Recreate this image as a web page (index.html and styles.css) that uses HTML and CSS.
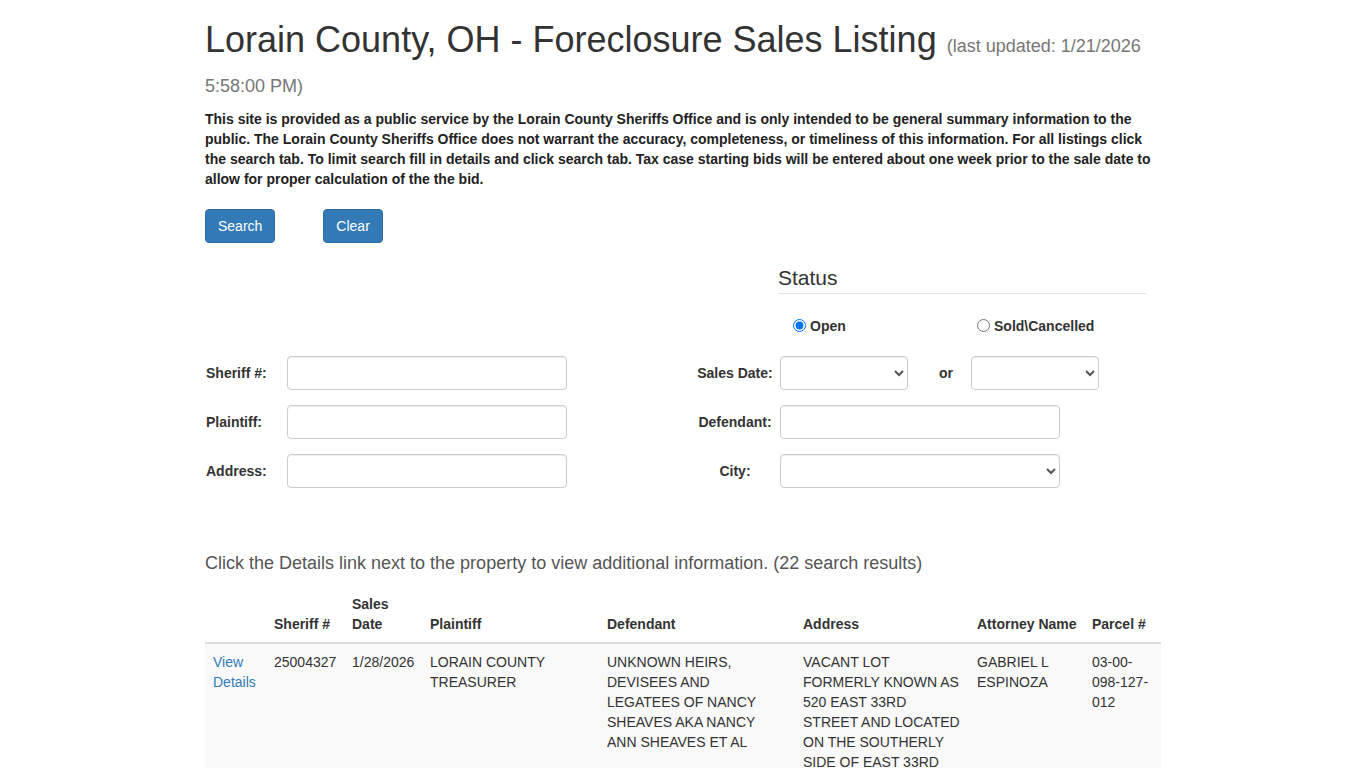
FILE: index.html
```html
<!DOCTYPE html>
<html lang="en">
<head>
<meta charset="utf-8">
<title>Lorain County, OH - Foreclosure Sales Listing</title>
<link rel="stylesheet" href="styles.css">
</head>
<body>
<div class="container">
  <h1 class="title">Lorain County, OH - Foreclosure Sales Listing <small class="updated">(last updated: 1/21/2026 5:58:00 PM)</small></h1>
  <p class="notice">This site is provided as a public service by the Lorain County Sheriffs Office and is only intended to be general summary information to the public. The Lorain County Sheriffs Office does not warrant the accuracy, completeness, or timeliness of this information. For all listings click the search tab. To limit search fill in details and click search tab. Tax case starting bids will be entered about one week prior to the sale date to allow for proper calculation of the the bid.</p>

  <div class="actions">
    <button class="btn btn-search" type="button">Search</button>
    <button class="btn btn-clear" type="button">Clear</button>
  </div>

  <div class="status-row">
    <div class="status">
      <div class="legend">Status</div>
      <div class="radios">
        <label class="radio"><input type="radio" name="status" checked> Open</label>
        <label class="radio"><input type="radio" name="status"> Sold\Cancelled</label>
      </div>
    </div>
  </div>

  <div class="form-grid">
    <div class="form-col">
      <div class="form-row">
        <label class="lbl-left">Sheriff #:</label>
        <input class="form-control w280" type="text">
      </div>
      <div class="form-row">
        <label class="lbl-left">Plaintiff:</label>
        <input class="form-control w280" type="text">
      </div>
      <div class="form-row">
        <label class="lbl-left">Address:</label>
        <input class="form-control w280" type="text">
      </div>
    </div>
    <div class="form-col">
      <div class="form-row">
        <label class="lbl-right">Sales Date:</label>
        <select class="form-control w128"><option></option></select>
        <span class="or">or</span>
        <select class="form-control w128"><option></option></select>
      </div>
      <div class="form-row">
        <label class="lbl-right">Defendant:</label>
        <input class="form-control w280" type="text">
      </div>
      <div class="form-row">
        <label class="lbl-right">City:</label>
        <select class="form-control w280"><option></option></select>
      </div>
    </div>
  </div>

  <h4 class="results-info">Click the Details link next to the property to view additional information. (22 search results)</h4>

  <table class="results">
    <thead>
      <tr>
        <th class="c-link"></th>
        <th class="c-sheriff">Sheriff #</th>
        <th class="c-date">Sales Date</th>
        <th class="c-plaintiff">Plaintiff</th>
        <th class="c-defendant">Defendant</th>
        <th class="c-address">Address</th>
        <th class="c-attorney nowrap">Attorney Name</th>
        <th class="c-parcel">Parcel #</th>
      </tr>
    </thead>
    <tbody>
      <tr>
        <td><a href="#">View Details</a></td>
        <td class="nowrap">25004327</td>
        <td class="nowrap">1/28/2026</td>
        <td>LORAIN COUNTY TREASURER</td>
        <td class="c-defendant">UNKNOWN HEIRS, DEVISEES AND LEGATEES OF NANCY SHEAVES AKA NANCY ANN SHEAVES ET AL</td>
        <td>VACANT LOT FORMERLY KNOWN AS 520 EAST 33RD STREET AND LOCATED ON THE SOUTHERLY SIDE OF EAST 33RD STREET</td>
        <td>GABRIEL L ESPINOZA</td>
        <td>03-00-098-127-012</td>
      </tr>
      <tr>
        <td><a href="#">View Details</a></td>
        <td class="nowrap">25004329</td>
        <td class="nowrap">1/28/2026</td>
        <td>LORAIN COUNTY TREASURER</td>
        <td class="c-defendant">UNKNOWN HEIRS OF JOHN DOE ET AL</td>
        <td>1422 E 31ST STREET</td>
        <td>GABRIEL L ESPINOZA</td>
        <td>03-00-097-110-021</td>
      </tr>
    </tbody>
  </table>
</div>
</body>
</html>
```
FILE: styles.css
```css
html, body {
  margin: 0;
  padding: 0;
  background: #fff;
}
body {
  font-family: "Liberation Sans", Arial, Helvetica, sans-serif;
  font-size: 14px;
  line-height: 20px;
  color: #333;
}
.container {
  width: 956px;
  margin: 0 auto;
}
.title {
  margin: 20px 0 10px;
  font-size: 36px;
  line-height: 1.1;
  font-weight: normal;
  color: #333;
}
.updated {
  font-size: 18px;
  line-height: 1;
  color: #777;
  font-weight: normal;
}
.notice {
  margin: 0 0 20px;
  font-size: 14px;
  font-weight: bold;
  line-height: 20px;
  color: #222;
}
.actions {
  display: flex;
  gap: 48px;
}
.btn {
  font-family: inherit;
  font-size: 14px;
  line-height: 20px;
  padding: 6px 12px;
  border-radius: 4px;
  color: #fff;
  background: #337ab7;
  border: 1px solid #2e6da4;
  cursor: pointer;
}
.status-row {
  margin-top: 24px;
  padding-left: 573px;
}
.status {
  width: 368px;
}
.legend {
  font-size: 21px;
  line-height: 20px;
  color: #333;
  border-bottom: 1px solid #e5e5e5;
  padding: 1px 0 5px;
}
.radios {
  display: flex;
  margin-top: 22px;
  padding-left: 15px;
}
.radio {
  flex: 0 0 184px;
  display: flex;
  align-items: center;
  font-weight: bold;
  font-size: 14px;
  line-height: 20px;
}
.radio input {
  width: 13px;
  height: 13px;
  margin: 0 4px 2px 0;
}
.form-grid {
  display: flex;
  margin-top: 20px;
}
.form-col {
  width: 478px;
  display: flex;
  flex-direction: column;
  gap: 15px;
}
.form-row {
  display: flex;
  align-items: center;
  height: 34px;
}
.lbl-left {
  width: 82px;
  padding-left: 1px;
  font-weight: bold;
}
.lbl-right {
  width: 90px;
  margin-left: 7px;
  text-align: center;
  font-weight: bold;
}
.form-control {
  box-sizing: border-box;
  height: 34px;
  padding: 6px 12px;
  font-family: inherit;
  font-size: 14px;
  color: #555;
  background: #fff;
  border: 1px solid #ccc;
  border-radius: 4px;
  box-shadow: inset 0 1px 1px rgba(0,0,0,.075);
}
.lbl-left + .form-control {
  margin-left: -1px;
}
select.form-control {
  padding: 6px 8px;
}
.w280 { width: 280px; }
.w128 { width: 128px; }
.or {
  font-weight: bold;
  margin-left: 31px;
  margin-right: 18px;
}
.results-info {
  margin: 65px 0 13px;
  font-size: 18px;
  line-height: 20px;
  font-weight: normal;
  color: #555;
}
.results {
  width: 956px;
  border-collapse: collapse;
  border-spacing: 0;
  table-layout: fixed;
}
.results th, .results td {
  padding: 8px;
  text-align: left;
  line-height: 20px;
}
.results th {
  vertical-align: bottom;
  border-bottom: 2px solid #ddd;
  font-weight: bold;
}
.results td {
  vertical-align: top;
  border-top: 1px solid #ddd;
}
.results tbody tr:nth-child(odd) {
  background: #f9f9f9;
}
.results a {
  color: #337ab7;
  text-decoration: none;
}
.nowrap { white-space: nowrap; }
.c-link { width: 45px; }
.c-sheriff { width: 62px; }
.c-date { width: 62px; }
.c-plaintiff { width: 161px; }
.results .c-defendant { width: 176px; padding-right: 12px; }
.c-address { width: 158px; }
.c-attorney { width: 99px; }
.c-parcel { width: 61px; }
```
